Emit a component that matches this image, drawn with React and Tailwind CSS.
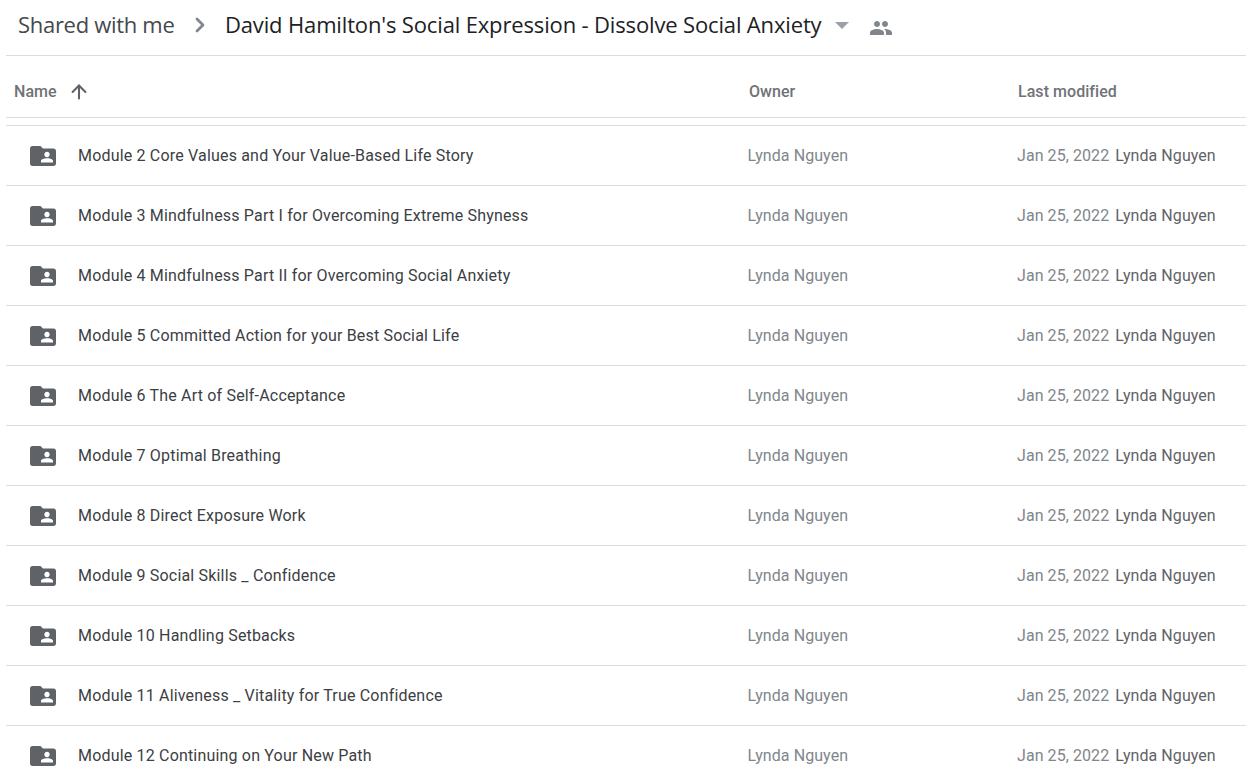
import React from "react";
import { ChevronRight, ArrowUp } from "lucide-react";

const modules = [
  "Module 2 Core Values and Your Value-Based Life Story",
  "Module 3 Mindfulness Part I for Overcoming Extreme Shyness",
  "Module 4 Mindfulness Part II for Overcoming Social Anxiety",
  "Module 5 Committed Action for your Best Social Life",
  "Module 6 The Art of Self-Acceptance",
  "Module 7 Optimal Breathing",
  "Module 8 Direct Exposure Work",
  "Module 9 Social Skills _ Confidence",
  "Module 10 Handling Setbacks",
  "Module 11 Aliveness _ Vitality for True Confidence",
  "Module 12 Continuing on Your New Path",
];

const SharedFolder = () => (
  <svg width="26" height="20" viewBox="0 0 26 20" className="shrink-0">
    <path
      fillRule="evenodd"
      fill="#5f6368"
      d="M2.5 0H10.5L13 2.5H23.5C24.9 2.5 26 3.6 26 5V17.5C26 18.9 24.9 20 23.5 20H2.5C1.1 20 0 18.9 0 17.5V2.5C0 1.1 1.1 0 2.5 0ZM17 5.8C15.5 5.8 14.3 7 14.3 8.5C14.3 10 15.5 11.2 17 11.2C18.5 11.2 19.7 10 19.7 8.5C19.7 7 18.5 5.8 17 5.8ZM11 16.5H23V14.8C23 13 19.4 12.2 17 12.2C14.6 12.2 11 13 11 14.8Z"
    />
  </svg>
);

const Row = ({ name }) => (
  <div className="flex h-[60px] shrink-0 items-center border-b border-[#dadce0] text-[16px]">
    <div className="flex w-[741.5px] items-center pl-[24px]">
      <SharedFolder />
      <span className="ml-[22px] tracking-[0.18px] text-[#3c4043]">{name}</span>
    </div>
    <div className="w-[269.5px] tracking-[0.08px] text-[#80868b]">Lynda Nguyen</div>
    <div className="tracking-[0.07px] whitespace-nowrap text-[#80868b]">
      Jan 25, 2022
      <span className="ml-[6px] text-[#5f6368]">Lynda Nguyen</span>
    </div>
  </div>
);

export default function App() {
  return (
    <div className="h-screen w-full overflow-hidden bg-white pl-[6px] font-['Roboto',sans-serif]">
      <div className="flex h-[56px] items-center border-b border-[#dadce0] pb-[6px] pl-[12px] font-['Open_Sans',sans-serif] text-[22px] tracking-[-0.3px]">
        <span className="text-[#45484c]">Shared with me</span>
        <ChevronRight size={24} strokeWidth={2.75} className="mr-[12.5px] ml-[14px] text-[#80868b]" />
        <span className="tracking-[-0.15px] text-[#202124]">David Hamilton's Social Expression - Dissolve Social Anxiety</span>
        <svg width="14" height="7" viewBox="0 0 14 7" className="mt-[1px] ml-[13px]">
          <path d="M0 0H14L7 7Z" fill="#9aa0a6" />
        </svg>
        <svg width="24" height="24" viewBox="0 0 24 24" className="mt-[6px] ml-[20px]" fill="#80868b">
          <path d="M16 11c1.66 0 2.99-1.34 2.99-3S17.66 5 16 5s-3 1.34-3 3 1.34 3 3 3zm-8 0c1.66 0 2.99-1.34 2.99-3S9.66 5 8 5 5 6.34 5 8s1.34 3 3 3zm0 2c-2.33 0-7 1.17-7 3.5V19h14v-2.5c0-2.33-4.67-3.5-7-3.5zm8 0c-.29 0-.62.02-.97.05 1.16.84 1.97 1.97 1.97 3.45V19h6v-2.5c0-2.33-4.67-3.5-7-3.5z" />
        </svg>
      </div>
      <div className="flex h-[62px] items-center border-b border-[#dadce0] pt-[10px] text-[16px] font-medium tracking-[0.05px] text-[#6f7377]">
        <div className="flex w-[743px] items-center pl-[8px]">
          <span>Name</span>
          <ArrowUp size={22} strokeWidth={2.25} className="ml-[11.5px] text-[#5f6368]" />
        </div>
        <div className="w-[269px]">Owner</div>
        <div>Last modified</div>
      </div>
      <div className="h-[8px] border-b border-[#dadce0]" />
      <div className="flex flex-col">
        {modules.map((m) => (
          <Row key={m} name={m} />
        ))}
      </div>
    </div>
  );
}
